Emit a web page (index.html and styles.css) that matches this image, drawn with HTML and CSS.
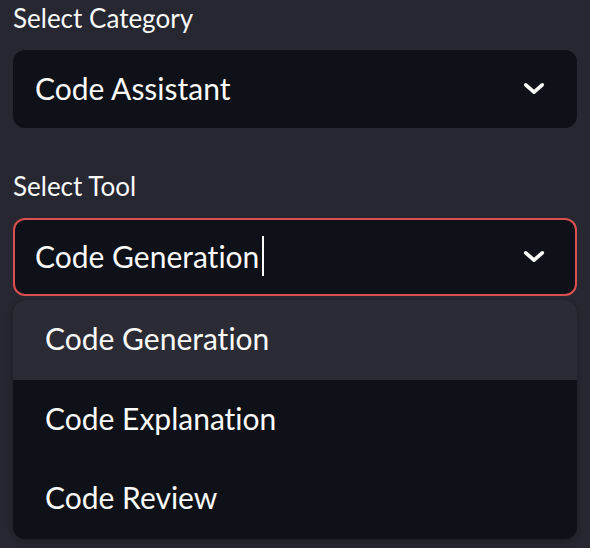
FILE: index.html
```html
<!DOCTYPE html>
<html>
<head>
<meta charset="utf-8">
<link rel="stylesheet" href="styles.css">
</head>
<body>
<div class="page">
  <div class="field">
    <div class="label">Select Category</div>
    <div class="select">
      <span class="value">Code Assistant</span>
      <svg class="chev" viewBox="0 0 24 14" width="22" height="13"><path d="M3 3 L12 11 L21 3" fill="none" stroke="#fafafa" stroke-width="4" stroke-linecap="round" stroke-linejoin="round"/></svg>
    </div>
  </div>
  <div class="field tool">
    <div class="label">Select Tool</div>
    <div class="select focus">
      <span class="value">Code Generation<span class="caret"></span></span>
      <svg class="chev" viewBox="0 0 24 14" width="22" height="13"><path d="M3 3 L12 11 L21 3" fill="none" stroke="#fafafa" stroke-width="4" stroke-linecap="round" stroke-linejoin="round"/></svg>
    </div>
    <ul class="menu">
      <li class="opt active">Code Generation</li>
      <li class="opt">Code Explanation</li>
      <li class="opt">Code Review</li>
    </ul>
  </div>
</div>
</body>
</html>
```
FILE: styles.css
```css
html, body {
  margin: 0;
  padding: 0;
  background: #262730;
  width: 590px;
  height: 548px;
  overflow: hidden;
}
.page {
  padding: 0 13px;
  font-family: Lato, "Liberation Sans", sans-serif;
  font-variant-ligatures: none;
  color: #fafafa;
}
.field {
  position: relative;
}
.tool {
  margin-top: 40px;
}
.label {
  height: 36px;
  line-height: 36px;
  font-size: 26px;
  margin-bottom: 14px;
}
.select {
  box-sizing: border-box;
  height: 78px;
  background: #0e1117;
  border-radius: 12px;
  border: 2px solid #0e1117;
  display: flex;
  align-items: center;
  justify-content: space-between;
  padding: 0 30px 2px 20px;
}
.select.focus {
  border-color: #dc4f50;
}
.value {
  font-size: 30px;
  display: flex;
  align-items: center;
}
.caret {
  display: inline-block;
  width: 1.5px;
  height: 40px;
  background: #fafafa;
  margin-left: 3px;
}
.chev {
  display: block;
}
.menu {
  position: absolute;
  left: 0;
  right: 0;
  top: 132px;
  margin: 0;
  padding: 0;
  list-style: none;
  background: #0e1117;
  border-radius: 12px;
  overflow: hidden;
  box-shadow: 0 2px 6px rgba(0,0,0,0.25);
}
.opt {
  height: 79.5px;
  line-height: 77px;
  padding-left: 32px;
  font-size: 30px;
}
.opt.active {
  background: #2a2b34;
}
```
